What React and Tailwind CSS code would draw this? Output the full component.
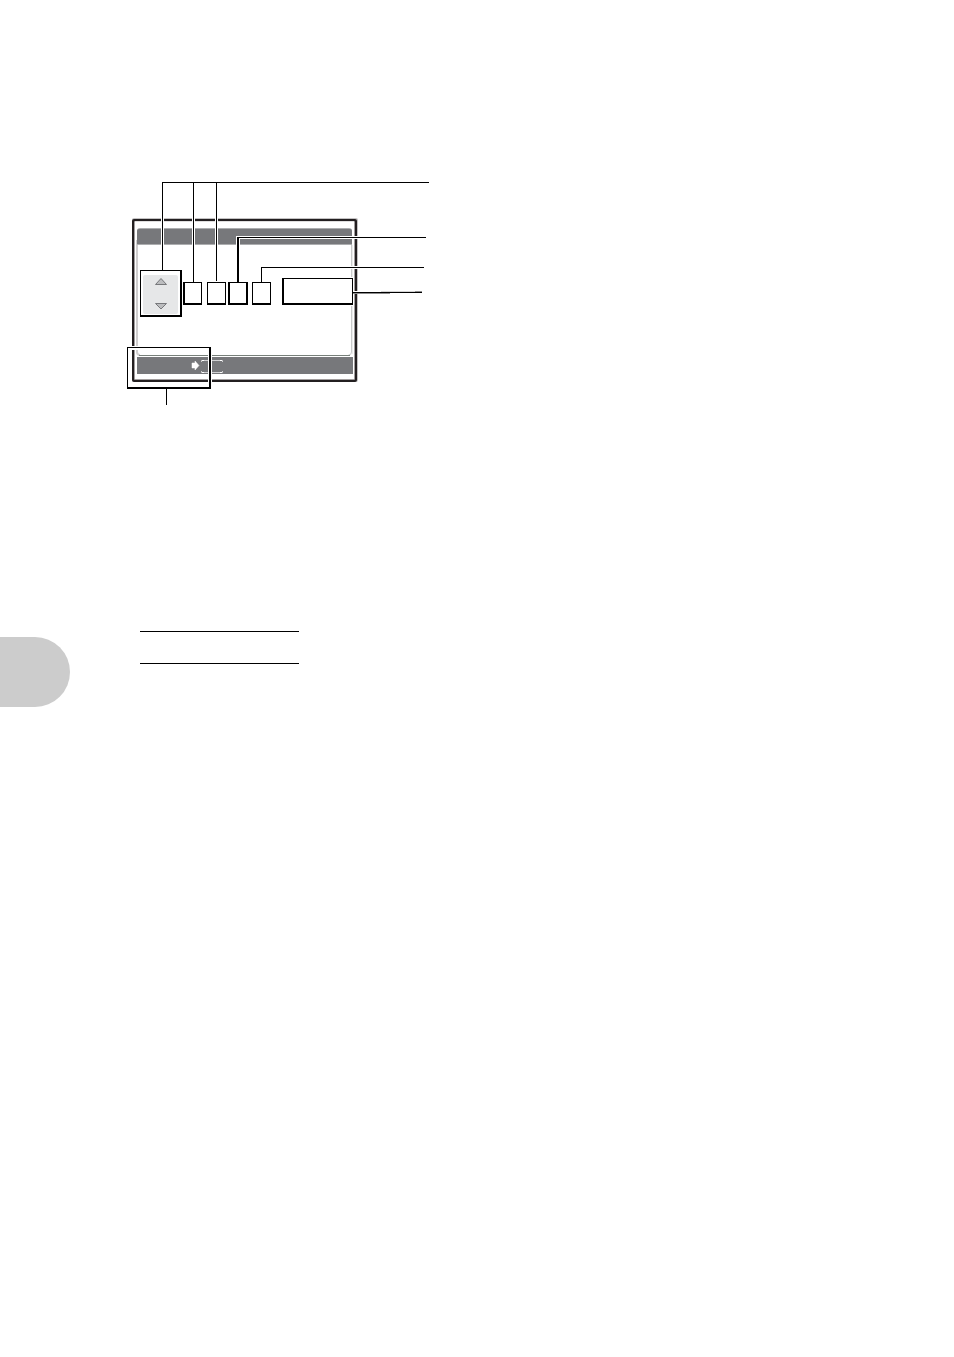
import React from 'react';

// Boxes round the editable fields: outer edges plus the width of each side
const FIELDS = [
  { x: 140, y: 270, w: 42, h: 47, left: 1, right: 2 },
  { x: 183, y: 282, w: 19, h: 23, left: 2, right: 1 },
  { x: 207, y: 282, w: 19, h: 23, left: 1, right: 1 },
  { x: 228, y: 282, w: 20, h: 23, left: 2, right: 2 },
  { x: 252, y: 282, w: 19, h: 23, left: 1, right: 1 },
  { x: 282, y: 278, w: 71, h: 27, left: 2, right: 1 },
  { x: 127, y: 347, w: 84, h: 42, left: 1, right: 2 },
];

// Leader lines, drawn as thin rectangles so they stay crisp
const LEADERS = [
  { x: 162, y: 182, w: 267, h: 1 },
  { x: 162, y: 182, w: 1, h: 88 },
  { x: 193, y: 182, w: 1, h: 100 },
  { x: 216, y: 182, w: 1, h: 99 },
  { x: 237, y: 237, w: 189, h: 1 },
  { x: 237, y: 237, w: 2, h: 45 },
  { x: 261, y: 267, w: 163, h: 1 },
  { x: 261, y: 267, w: 1, h: 15 },
  { x: 353, y: 292, w: 69, h: 1 },
  { x: 166, y: 389, w: 1, h: 16 },
];

function Field({ x, y, w, h, left, right }) {
  return (
    <g>
      <rect x={x} y={y} width={w} height="1" />
      <rect x={x} y={y + h - 2} width={w} height="2" />
      <rect x={x} y={y} width={left} height={h} />
      <rect x={x + w - right} y={y} width={right} height={h} />
    </g>
  );
}

function CameraScreen() {
  return (
    <g>
      {/* Bezel, outermost layer first */}
      <rect x="132" y="218" width="226" height="164" rx="2" fill="#c4c2c3" />
      <rect x="132" y="219" width="225" height="163" rx="2" fill="#231f20" />
      <rect x="134" y="221" width="221" height="159" rx="1" fill="#a19d9e" />
      <rect x="135" y="222" width="219" height="157" fill="#fff" />
      <rect x="135" y="221" width="219" height="1" fill="#e0dfdf" />

      {/* Panel */}
      <path d="M137 240V352q0 3 3 3" fill="none" stroke="#d0cecf" strokeWidth="2" />
      <path d="M351.5 240V352q0 3-3 3" fill="none" stroke="#c8caca" strokeWidth="1" />
      <rect x="352" y="245" width="1" height="109" fill="#ececec" />
      <rect x="139" y="355" width="211" height="1" fill="#77807a" />

      {/* Title bar and footer */}
      <path d="M137 245V231q0-3 3-3H349q3 0 3 3V245Z" fill="#acadaf" />
      <path d="M137 244V231q0-2 2-2H350q2 0 2 2V244Z" fill="#77787b" />
      <rect x="137" y="357" width="216" height="17" fill="#77787b" />

      {/* Up/down selector */}
      <rect x="143" y="275" width="35" height="39" rx="2" fill="#e6e7e8" />
      <path d="M161 278.5l5.5 6h-11z" fill="#bcbdbf" stroke="#77787b" strokeWidth="1" />
      <path d="M161 309l-5.5-5.5h11z" fill="#bcbdbf" stroke="#77787b" strokeWidth="1" />

      {/* Arrow and button brackets */}
      <path d="M192 363h3v-2l4 4.5-4 4.5v-2h-3z" fill="#fff" stroke="#fff" strokeWidth="0.5" />
      <path d="M201.5 362v-1.5h21v1.5M201.5 371v1.5h21v-1.5" fill="none" stroke="#d0d0d2" strokeWidth="1" />
      <path d="M202 360.5h2M220 360.5h2M202 372.5h2M220 372.5h2" fill="none" stroke="#fff" strokeWidth="1" />
    </g>
  );
}

function ScreenFigure() {
  return (
    <svg className="block w-[320px] h-[240px]" viewBox="120 170 320 240" aria-hidden="true">
      <CameraScreen />

      {/* White halo keeps the lines readable over the screen */}
      <g fill="#fff">
        {LEADERS.map((l, i) => (
          <rect key={i} x={l.x - 1} y={l.y - 1} width={l.w + 2} height={l.h + 2} />
        ))}
      </g>
      <g fill="none" stroke="#fff" strokeWidth="4">
        <rect x="128" y="348" width="82" height="40" />
        <rect x="283" y="279" width="69" height="25" />
      </g>

      <path d="M353 293h37v1h-37z" fill="#8c8c8c" />
      <path d="M381 291h41v1h-41z" fill="#d4d4d4" />
      <path d="M415 291h7v1h-7z" fill="#8c8c8c" />
      <g fill="#000">
        {LEADERS.map((l, i) => (
          <rect key={i} x={l.x} y={l.y} width={l.w} height={l.h} />
        ))}
        {FIELDS.map((f, i) => (
          <Field key={i} {...f} />
        ))}
      </g>
    </svg>
  );
}

export default function App() {
  return (
    <main className="min-h-screen bg-white pt-[170px]">
      <figure className="pl-[120px]">
        <ScreenFigure />
      </figure>

      <div className="flex items-start gap-[70px] mt-[221px]">
        {/* Chapter tab on the page edge */}
        <div className="w-[70px] h-[70px] mt-[6px] rounded-r-full bg-[#ccc] shrink-0" />
        <div className="w-[159px] h-[33px] border-y border-black" />
      </div>
    </main>
  );
}
